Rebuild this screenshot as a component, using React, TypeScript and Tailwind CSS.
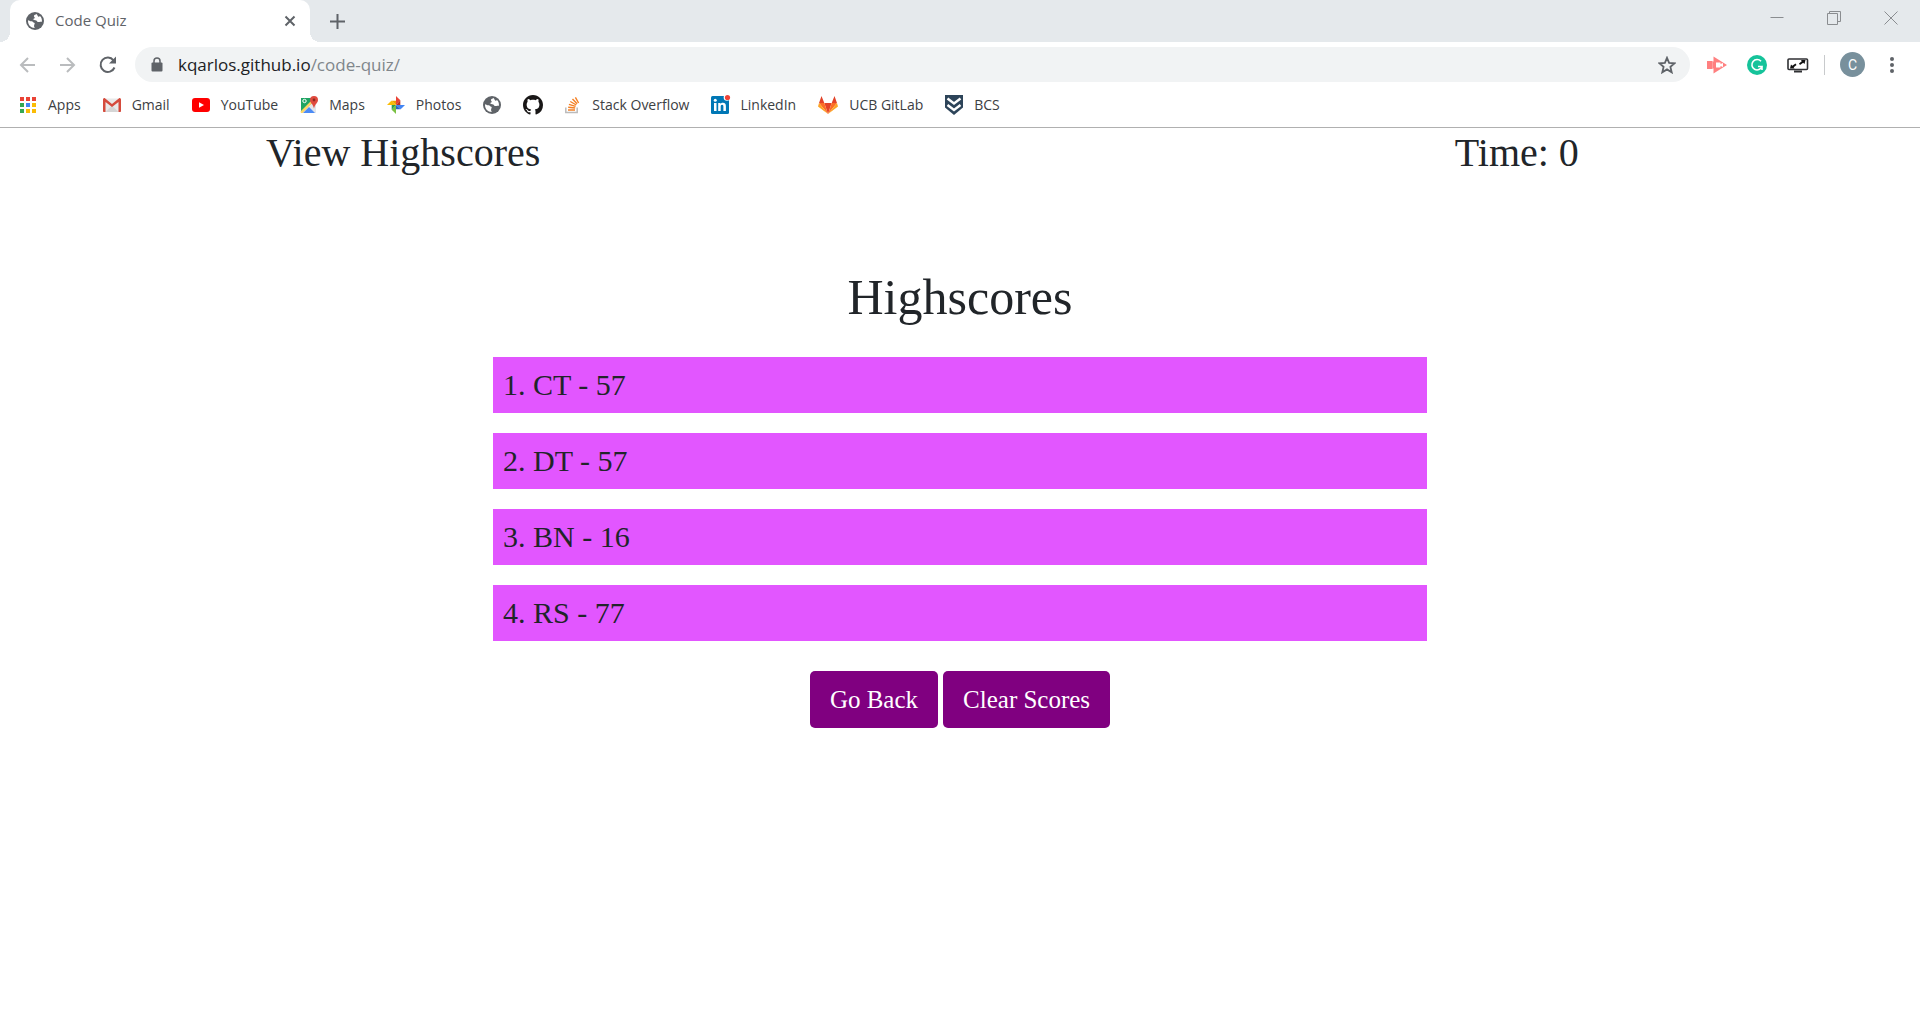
import React from "react";

const ui = "font-['Open_Sans',sans-serif]";

function Globe() {
  return (
    <svg viewBox="0 0 18 18" className="size-[18px]" aria-hidden="true">
      <circle cx="9" cy="9" r="9" fill="#5f6368" />
      <path
        d="M2 8.2c1 .2 2.200 1.200 3.800 1 1 .1 1 .9 1.800 1.300 1.200.3 1.400.9.900 1.700-.6.700-.6 2.600.3 3.700C5 16 2 13 2 9zM10.300 2.100c-.4.900-2.300.7-2.400 1.900-.1 1 1 1 .8 1.900-.3.900-2 .7-1.900 1.700.1.900 2.500.4 3.500.8 1 .4.900 1.500 1.900 1.700.9.100 1.700-.6 3.700-.3.300-2.600-.4-4.600-2-5.900-.4.800-1.100 1-1.700.6-.7-.5-.8-1.700-1.900-2.400z"
        fill="#fff"
      />
    </svg>
  );
}

function AppsIcon() {
  const colors = ["#ea4335", "#ea4335", "#ea4335", "#34a853", "#4285f4", "#fbbc05", "#34a853", "#fbbc05", "#fbbc05"];
  return (
    <svg viewBox="0 0 18 18" className="size-[18px]" aria-hidden="true">
      {colors.map((c, i) => (
        <rect key={i} x={1 + (i % 3) * 6} y={1 + Math.floor(i / 3) * 6} width="4" height="4" fill={c} />
      ))}
    </svg>
  );
}

function GmailIcon() {
  return (
    <svg viewBox="0 0 18 18" className="size-[18px]" aria-hidden="true">
      <path d="M1 2.500h16V16H1z" fill="#e9e9e9" />
      <path d="M2.500 16 9 9.500l6.500 6.500z" fill="#d5d5d5" />
      <path d="M0 3.500C0 2.500.8 2 1.600 2L9 8l7.400-6c.9 0 1.600.6 1.600 1.500V15c0 .6-.4 1-1 1h-1.500V6L9 11 2.500 6v10H1c-.6 0-1-.4-1-1z" fill="#d54b3d" />
    </svg>
  );
}

function YouTubeIcon() {
  return (
    <svg viewBox="0 0 18 18" className="size-[18px]" aria-hidden="true">
      <rect y="2" width="18" height="14" rx="3" fill="#f00" />
      <path d="M7 6.200v5.600L12 9z" fill="#fff" />
    </svg>
  );
}

function MapsIcon() {
  return (
    <svg viewBox="0 0 18 18" className="size-[18px]" aria-hidden="true">
      <path d="M1 2h15v15H1z" fill="#e3e6ea" />
      <path d="M1 2h11l1 4L1 17z" fill="#1fa463" />
      <path d="M3 17 9 11l6 6z" fill="#4c8bf5" />
      <path d="M0.500 15.500 11.500 4.500l1.500 1.700L2.500 17H1z" fill="#fdd663" />
      <circle cx="4.500" cy="5" r="1.700" fill="none" stroke="#fff" />
      <path d="M14 0a4 4 0 0 0-4 4c0 3 3.200 4 4 8.500.8-4.500 4-5.500 4-8.500a4 4 0 0 0-4-4z" fill="#e04a3f" />
      <circle cx="14" cy="4" r="1.400" fill="#8c2a20" />
    </svg>
  );
}

function PhotosIcon() {
  return (
    <svg viewBox="0 0 18 18" className="size-[18px]" aria-hidden="true">
      <path d="M9 0l4.300 4.300L9 9z" fill="#ea4335" />
      <path d="M13.300 4.300V9H9z" fill="#b93221" />
      <path d="M18 9l-4.300 4.300L9 9z" fill="#4285f4" />
      <path d="M13.700 13.300H9V9z" fill="#2a66c8" />
      <path d="M9 18l-4.300-4.300L9 9z" fill="#7ac143" />
      <path d="M4.700 13.700V9H9z" fill="#2e9e4f" />
      <path d="M0 9l4.300-4.300L9 9z" fill="#fbbc05" />
      <path d="M4.300 4.700H9V9z" fill="#f0a100" />
    </svg>
  );
}

function GitHubIcon() {
  return (
    <svg viewBox="0 0 16 16" className="size-5" aria-hidden="true">
      <path
        fill="#191717"
        d="M8 0C3.580 0 0 3.580 0 8c0 3.540 2.290 6.530 5.470 7.590.4.070.55-.17.55-.38 0-.19-.01-.82-.01-1.490-2.010.37-2.530-.49-2.690-.94-.09-.23-.48-.94-.82-1.130-.28-.15-.68-.52-.01-.53.63-.01 1.080.58 1.230.82.720 1.210 1.870.87 2.330.66.070-.52.280-.87.510-1.070-1.780-.2-3.640-.89-3.640-3.950 0-.87.310-1.590.82-2.150-.08-.2-.36-1.020.08-2.120 0 0 .67-.21 2.200.82.640-.18 1.320-.27 2-.27s1.360.09 2 .27c1.530-1.040 2.200-.82 2.200-.82.440 1.100.16 1.920.08 2.120.51.560.82 1.270.82 2.150 0 3.070-1.870 3.750-3.650 3.950.29.25.54.73.54 1.480 0 1.070-.01 1.930-.01 2.200 0 .21.15.46.55.38A8.010 8.010 0 0 0 16 8c0-4.420-3.580-8-8-8z"
      />
    </svg>
  );
}

function StackIcon() {
  return (
    <svg viewBox="2 0 16 18" className="h-[18px] w-4" aria-hidden="true" fill="none">
      <path d="M2.800 11.500v5h11.400v-5" stroke="#bcbbbb" strokeWidth="1.500" />
      <path d="M5 14h7M5.200 11.300l7 .7M5.900 8.400l6.700 1.900M7.300 5.500l6 3.500M9.500 3l4.600 4.800M12.400 1.300l3.200 5.700" stroke="#f48024" strokeWidth="1.400" />
    </svg>
  );
}

function LinkedInIcon() {
  return (
    <svg viewBox="0 1 18 20" className="h-5 w-[18px] overflow-visible" aria-hidden="true">
      <rect x="0" y="2" width="18" height="18" rx="1.500" fill="#0077b5" />
      <path d="M3 9h2.500v8H3zM7.200 9h2.300v1.100c.5-.8 1.300-1.300 2.400-1.300 2.300 0 3 1.400 3 3.600V17h-2.500v-4.200c0-1.100-.2-2-1.300-2s-1.400.8-1.400 2V17H7.200z" fill="#fff" />
      <circle cx="4.250" cy="6.300" r="1.500" fill="#fff" />
      <circle cx="16" cy="3.500" r="3.300" fill="#fff" />
      <circle cx="16.500" cy="3.500" r="2.600" fill="#f04438" />
    </svg>
  );
}

function GitLabIcon() {
  return (
    <svg viewBox="0 0 20 20" className="size-5" aria-hidden="true">
      <path d="M10 19 6.300 8h7.400z" fill="#e24329" />
      <path d="M10 19 6.300 8H1zM10 19l3.700-11H19z" fill="#fc6d26" />
      <path d="M1 8 0 11.500 10 19zM19 8l1 3.500L10 19z" fill="#fca326" />
      <path d="M1 8 3.500 1 6.300 8zM19 8l-2.500-7-2.800 7z" fill="#e24329" />
    </svg>
  );
}

function ShieldIcon() {
  return (
    <svg viewBox="0 0 18 20" className="h-5 w-[18px]" aria-hidden="true">
      <path d="M0 0h18v12.500L9 20l-9-7.500z" fill="#2d4459" />
      <path d="m2.500 3.500 6.500 5 6.500-5M2.500 10 9 15l6.500-5" fill="none" stroke="#fff" strokeWidth="2.400" />
    </svg>
  );
}

const bookmarks = [
  { label: "Apps", icon: <AppsIcon /> },
  { label: "Gmail", icon: <GmailIcon /> },
  { label: "YouTube", icon: <YouTubeIcon /> },
  { label: "Maps", icon: <MapsIcon /> },
  { label: "Photos", icon: <PhotosIcon /> },
  { label: "", name: "Website", icon: <Globe /> },
  { label: "", name: "GitHub", icon: <GitHubIcon /> },
  { label: "Stack Overflow", icon: <StackIcon /> },
  { label: "LinkedIn", icon: <LinkedInIcon /> },
  { label: "UCB GitLab", icon: <GitLabIcon /> },
  { label: "BCS", icon: <ShieldIcon /> },
];

function TabStrip() {
  return (
    <div className="flex h-[42px] items-stretch bg-[#e5e9ec] pl-[10px]">
      <div className="relative flex w-[300px] items-center rounded-t-[10px] bg-white pr-3 pl-4">
        <span className="absolute bottom-0 -left-[10px] size-[10px] bg-[radial-gradient(circle_at_0_0,#e5e9ec_10px,white_10px)]" />
        <span className="absolute -right-[10px] bottom-0 size-[10px] bg-[radial-gradient(circle_at_100%_0,#e5e9ec_10px,white_10px)]" />
        <Globe />
        <span className="ml-[11px] flex-1 pb-0.5 text-[15px] leading-5 text-[#5f6368]">Code Quiz</span>
        <button aria-label="Close tab" className="flex size-4 items-center justify-center">
          <svg viewBox="0 0 12 12" className="size-3" stroke="#5f6368" strokeWidth="2">
            <path d="m1.500 1.500 9 9m0-9-9 9" />
          </svg>
        </button>
      </div>
      <button aria-label="New tab" className="ml-5 flex items-center">
        <svg viewBox="0 0 15 15" className="size-[15px]" stroke="#5f6368" strokeWidth="2">
          <path d="M7.500 0v15M0 7.500h15" />
        </svg>
      </button>
      <div className="ml-auto flex h-9 items-center gap-[43px] pr-[22px]">
        <button aria-label="Minimize">
          <svg viewBox="0 0 14 14" className="size-[14px]" stroke="#8a8d90">
            <path d="M.5 6.500h13" />
          </svg>
        </button>
        <button aria-label="Restore">
          <svg viewBox="0 0 14 14" className="size-[14px]" fill="none" stroke="#8a8d90">
            <path d="M.5 2.500h10v11H.5zM2.500 2.500v-2h11v10h-3" />
          </svg>
        </button>
        <button aria-label="Close">
          <svg viewBox="0 0 14 14" className="size-[14px]" stroke="#8a8d90">
            <path d="m.5.500 13 13m0-13-13 13" />
          </svg>
        </button>
      </div>
    </div>
  );
}

function Toolbar() {
  return (
    <div className="flex h-[45px] items-center pr-[26px] pl-[18px]">
      <div className="flex items-center gap-5">
        <button aria-label="Back">
          <svg viewBox="0 0 20 20" className="size-5" fill="none" stroke="#babcbe" strokeWidth="2">
            <path d="M17 10H3m7-7-7 7 7 7" />
          </svg>
        </button>
        <button aria-label="Forward">
          <svg viewBox="0 0 20 20" className="size-5" fill="none" stroke="#babcbe" strokeWidth="2">
            <path d="M2 10h14m-7-7 7 7-7 7" />
          </svg>
        </button>
        <button aria-label="Reload">
          <svg viewBox="0 0 20 20" className="size-5" fill="none" stroke="#5f6368" strokeWidth="2">
            <path d="M16.500 12.500A7.200 7.200 0 1 1 15.500 5.300" />
            <path d="M18 1.500V8.500h-7z" fill="#5f6368" stroke="none" />
          </svg>
        </button>
      </div>
      <div className="ml-[17px] flex h-[35px] flex-1 items-center rounded-full bg-[#f1f3f4] pr-[14px] pl-4">
        <svg viewBox="0 0 12 16" className="h-4 w-3" aria-hidden="true">
          <rect x="0.500" y="5.500" width="11" height="9" rx="1" fill="#5f6368" />
          <path d="M3 6V4a3 3 0 0 1 6 0v2" fill="none" stroke="#5f6368" strokeWidth="1.500" />
        </svg>
        <a href="#" className="ml-[15px] flex-1 text-[17px] leading-6 text-[#202124]">
          kqarlos.github.io<span className="text-[#80868b]">/code-quiz/</span>
        </a>
        <button aria-label="Bookmark this page">
          <svg viewBox="0 0 18 18" className="size-[18px]" fill="none" stroke="#5f6368" strokeWidth="1.800">
            <path d="m9 1.800 2.100 5.100 5.500.4-4.200 3.600 1.300 5.400L9 13.400l-4.700 2.900 1.300-5.400-4.200-3.600 5.500-.4z" />
          </svg>
        </button>
      </div>
      <div className="ml-[17px] flex items-center gap-5">
        <button aria-label="Screen recorder">
          <svg viewBox="0 0 20 18" className="h-[18px] w-5">
            <path d="M0 5h5.500v8H0zM6.500 .5v17L20 9z" fill="#ff8080" />
            <path d="M9 6.500h4.500v1.500L16 7v4l-2.500-1v1.500H9z" fill="#fff" />
            <path d="M5.500 5.500h3v7h-3z" fill="#ff8080" />
          </svg>
        </button>
        <button aria-label="Grammar checker">
          <svg viewBox="0 0 20 20" className="size-5" fill="none">
            <circle cx="10" cy="10" r="10" fill="#15c39a" />
            <path d="M14 6.300A5.200 5.200 0 1 0 15 11.500h-4M15 11v4" stroke="#fff" strokeWidth="1.600" />
          </svg>
        </button>
        <button aria-label="Screen resizer">
          <svg viewBox="0 0 22 16" className="h-4 w-[22px]" fill="none">
            <rect x="1" y="2" width="19.500" height="10.500" rx="1" stroke="#303134" strokeWidth="1.600" />
            <path d="M7 14.500h8" stroke="#303134" strokeWidth="2" />
            <path d="m3 11.500 1-4 1.300 1.200L8.500 6.500 9.500 8 6.700 10.200l.8 1.300zM18.500 3l-1 4-1.300-1.200L13 8l-1-1.500 2.800-2.200L14 3z" fill="#111" />
          </svg>
        </button>
      </div>
      <span className="mx-[15px] h-5 w-px bg-[#c8cacc]" />
      <button aria-label="Profile" className="flex size-[25px] items-center justify-center rounded-full bg-[#78909c] font-[Roboto,sans-serif] text-sm text-white">
        C
      </button>
      <button aria-label="Menu" className="ml-[25px]">
        <svg viewBox="0 0 4 18" className="h-[18px] w-1" fill="#5f6368">
          <circle cx="2" cy="3" r="2" />
          <circle cx="2" cy="9" r="2" />
          <circle cx="2" cy="15" r="2" />
        </svg>
      </button>
    </div>
  );
}

function BookmarksBar() {
  return (
    <nav className="flex h-[41px] items-center gap-[22px] border-b border-[#b0b0b0] pb-1 pl-[19px]">
      {bookmarks.map((b, i) => (
        <a key={i} href="#" aria-label={b.label || b.name} className="flex items-center gap-[11px] text-sm leading-5 whitespace-nowrap text-[#3c4043]">
          {b.icon}
          {b.label && <span>{b.label}</span>}
        </a>
      ))}
    </nav>
  );
}

const scores = ["1. CT - 57", "2. DT - 57", "3. BN - 16", "4. RS - 77"];

export default function App() {
  return (
    <div className="min-h-screen bg-white">
      <header className={ui}>
        <TabStrip />
        <Toolbar />
        <BookmarksBar />
      </header>
      <div className="font-['Liberation_Serif',serif] text-[#212529]">
        <div className="grid grid-cols-[42fr_16fr_42fr] text-center text-[40px] leading-[50px]">
          <a href="#">View Highscores</a>
          <p className="col-start-3">Time: 0</p>
        </div>
        <main className="mx-auto mt-[89px] max-w-[934px]">
          <h1 className="text-center text-[50px] leading-[60px]">Highscores</h1>
          <ul className="mt-[30px] flex flex-col gap-5 text-[30px] leading-9">
            {scores.map((s) => (
              <li key={s} className="bg-[#e256ff] p-[10px]">
                {s}
              </li>
            ))}
          </ul>
          <div className="mt-[30px] flex justify-center gap-[5px] text-[25px] leading-[37px] text-white">
            <button className="rounded-[5px] bg-[#800080] px-5 py-[10px]">Go Back</button>
            <button className="rounded-[5px] bg-[#800080] px-5 py-[10px]">Clear Scores</button>
          </div>
        </main>
      </div>
    </div>
  );
}
